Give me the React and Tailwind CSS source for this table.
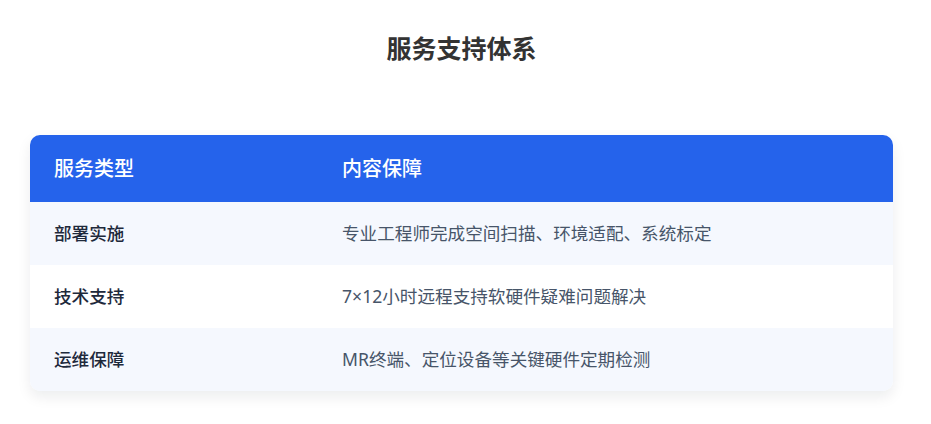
import React from 'react';

const rows = [
  { type: '部署实施', content: '专业工程师完成空间扫描、环境适配、系统标定' },
  { type: '技术支持', content: '7×12小时远程支持软硬件疑难问题解决' },
  { type: '运维保障', content: 'MR终端、定位设备等关键硬件定期检测' },
];

const App = () => {
  return (
    <div
      className="min-h-screen bg-white px-[30px] pt-[29px]"
      style={{ fontFamily: '"Noto Sans", "Noto Sans CJK SC", sans-serif' }}
    >
      <div className="w-[863px]">
        <h2 className="h-[38px] text-center text-[25px] font-bold leading-[38px] text-[#333333]">
          服务支持体系
        </h2>

        <div className="mt-[68px] overflow-hidden rounded-[10px] bg-white shadow-[0_6px_14px_rgba(15,23,42,0.08)]">
          <div className="flex h-[67px] items-center bg-[#2563eb] text-[20px] font-medium text-white">
            <div className="w-[312px] pl-[24px]">服务类型</div>
            <div className="flex-1">内容保障</div>
          </div>
          {rows.map((row, i) => (
            <div
              key={row.type}
              className={`flex h-[63px] items-center text-[17.6px] ${i % 2 === 0 ? 'bg-[#f5f8fe]' : 'bg-white'}`}
            >
              <div className="w-[312px] pl-[24px] font-medium text-[#1e293b]">{row.type}</div>
              <div className="flex-1 text-[#475569]">{row.content}</div>
            </div>
          ))}
        </div>
      </div>
    </div>
  );
};

export default App;
